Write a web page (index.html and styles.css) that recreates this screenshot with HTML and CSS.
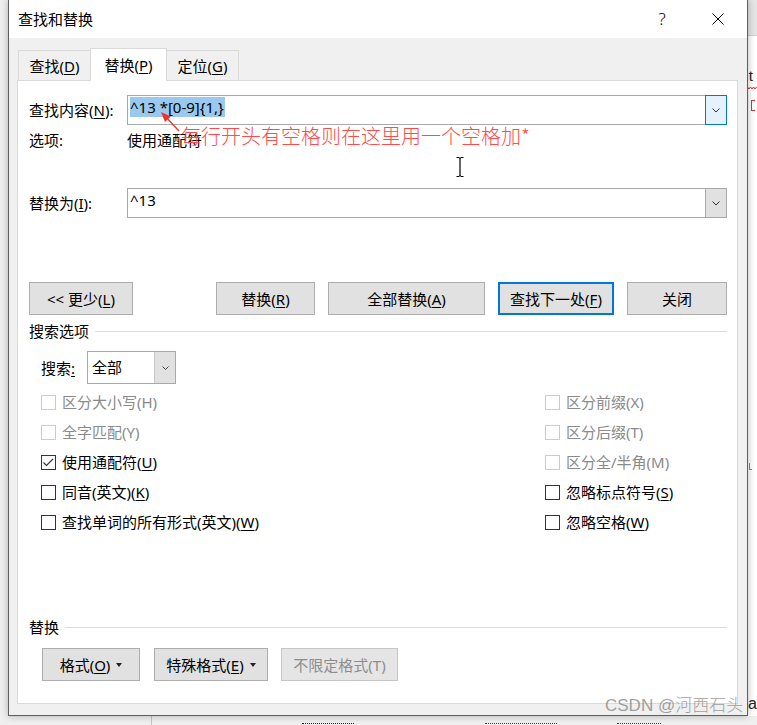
FILE: index.html
```html
<!DOCTYPE html>
<html lang="zh-CN">
<head>
<meta charset="utf-8">
<title>查找和替换</title>
<link rel="stylesheet" href="styles.css">
</head>
<body>
<div class="desk">
  <div class="bg-top-right"></div>
  <div class="bg-right"></div>
  <span class="frag frag-it">lit</span>
  <svg class="frag frag-squiggle" width="12" height="4" viewBox="0 0 12 4"><polyline points="0,3 1.5,1 3,3 4.5,1 6,3 7.5,1 9,3 10.5,1 12,3" fill="none" stroke="#e0302a" stroke-width="1"/></svg>
  <span class="frag frag-bracket"></span>
  <span class="frag frag-l"></span>
  <span class="frag frag-a">a</span>
  <span class="frag frag-vline"></span>
  <span class="frag frag-dots d1"></span>
  <span class="frag frag-dots d2"></span>
  <span class="frag frag-dots d3"></span>

  <div class="dialog">
    <div class="titlebar">
      <span class="title">查找和替换</span>
      <span class="help">?</span>
      <svg class="close" width="12" height="12" viewBox="0 0 12 12"><path d="M0.5 0.5 L11.5 11.5 M11.5 0.5 L0.5 11.5" stroke="#000" stroke-width="1" fill="none"/></svg>
    </div>
    <div class="body">
      <div class="tabs">
        <div class="tab t1">查找(<u>D</u>)</div>
        <div class="tab t2 active">替换(<u>P</u>)</div>
        <div class="tab t3">定位(<u>G</u>)</div>
      </div>
      <div class="panel">
        <div class="field-row">
          <span class="lbl">查找内容(<u>N</u>):</span>
          <div class="combo">
            <div class="combo-text"><span class="sel">^13 *[0-9]{1,}</span></div>
            <div class="combo-btn focus">
              <svg width="8" height="5" viewBox="0 0 8 5"><polyline points="0.5,0.5 4,4 7.5,0.5" fill="none" stroke="#333" stroke-width="1"/></svg>
            </div>
          </div>
        </div>
        <div class="opt-row">
          <span class="lbl">选项:</span>
          <span>使用通配符</span>
        </div>
        <div class="field-row replace-row">
          <span class="lbl">替换为(<u>I</u>):</span>
          <div class="combo">
            <div class="combo-text"><span class="plain">^13</span></div>
            <div class="combo-btn">
              <svg width="8" height="5" viewBox="0 0 8 5"><polyline points="0.5,0.5 4,4 7.5,0.5" fill="none" stroke="#333" stroke-width="1"/></svg>
            </div>
          </div>
        </div>
        <div class="btn-row">
          <div class="btn b-less">&lt;&lt; 更少(<u>L</u>)</div>
          <div class="btn-group">
            <div class="btn b-rep">替换(<u>R</u>)</div>
            <div class="btn b-all">全部替换(<u>A</u>)</div>
            <div class="btn b-next default">查找下一处(<u>F</u>)</div>
            <div class="btn b-close">关闭</div>
          </div>
        </div>
        <div class="section sec-search">
          <span class="sec-label">搜索选项</span>
          <span class="rule"></span>
        </div>
        <div class="search-row">
          <span class="search-lbl">搜索<u>:</u></span>
          <div class="select">
            <span class="select-text">全部</span>
            <span class="select-btn">
              <svg width="7" height="4" viewBox="0 0 7 4"><polyline points="0.5,0.5 3.5,3.5 6.5,0.5" fill="none" stroke="#444" stroke-width="1"/></svg>
            </span>
          </div>
        </div>
        <div class="checks">
          <div class="chk disabled"><span class="box"></span><span>区分大小写(H)</span></div>
          <div class="chk disabled"><span class="box"></span><span>区分前缀(X)</span></div>
          <div class="chk disabled"><span class="box"></span><span>全字匹配(Y)</span></div>
          <div class="chk disabled"><span class="box"></span><span>区分后缀(T)</span></div>
          <div class="chk"><span class="box"><svg width="13" height="13" viewBox="0 0 13 13"><polyline points="1.5,6.5 4.5,9.5 11,3" fill="none" stroke="#333" stroke-width="1.1"/></svg></span><span>使用通配符(<u>U</u>)</span></div>
          <div class="chk disabled"><span class="box"></span><span>区分全/半角(M)</span></div>
          <div class="chk"><span class="box"></span><span>同音(英文)(<u>K</u>)</span></div>
          <div class="chk"><span class="box"></span><span>忽略标点符号(<u>S</u>)</span></div>
          <div class="chk"><span class="box"></span><span>查找单词的所有形式(英文)(<u>W</u>)</span></div>
          <div class="chk"><span class="box"></span><span>忽略空格(<u>W</u>)</span></div>
        </div>
        <div class="section sec-replace">
          <span class="sec-label">替换</span>
          <span class="rule"></span>
        </div>
        <div class="btn-row2">
          <div class="btn b-fmt">格式(<u>O</u>)<span class="caret"></span></div>
          <div class="btn b-special">特殊格式(<u>E</u>)<span class="caret"></span></div>
          <div class="btn b-nofmt disabled">不限定格式(T)</div>
        </div>
      </div>
    </div>
  </div>

  <svg class="annot-arrow" width="30" height="30" viewBox="0 0 30 30">
    <line x1="12.5" y1="13.8" x2="24" y2="26" stroke="#f03030" stroke-width="1.3"/>
    <polygon points="6,7 15.8,11.5 10,17" fill="#f03030"/>
  </svg>
  <div class="annot-text">每行开头有空格则在这里用一个空格加*</div>
  <svg class="ibeam" width="12" height="22" viewBox="0 0 12 22">
    <path d="M2.5 1.5 H5 M7 1.5 H9.5 M6 2 V20 M2.5 20.5 H5 M7 20.5 H9.5 M5 2 H7 M5 20 H7" stroke="#000" stroke-width="1.2" fill="none"/>
  </svg>
  <div class="watermark">CSDN @河西石头</div>
</div>
</body>
</html>
```

FILE: styles.css
```css
* { box-sizing: border-box; }

html, body {
  margin: 0;
  padding: 0;
}

body {
  width: 757px;
  height: 725px;
  overflow: hidden;
  background: #efefef;
  font-family: "Noto Sans", "Noto Sans CJK SC", sans-serif;
  font-size: 15px;
  line-height: 20px;
  color: #000;
}

u {
  text-decoration: underline;
  text-decoration-thickness: 1px;
  text-underline-offset: 2px;
}

.desk {
  position: relative;
  width: 757px;
  height: 725px;
}

/* ---------- backdrop fragments (behind the dialog) ---------- */
.bg-top-right {
  position: absolute;
  left: 748px;
  top: 0;
  width: 9px;
  height: 36px;
  background: #e4e4e4;
  border-bottom: 1px solid #d0d0d0;
}
.bg-right {
  position: absolute;
  left: 748px;
  top: 36px;
  width: 9px;
  height: 680px;
  background: #ffffff;
}
.frag { position: absolute; }
.frag-it {
  left: 742px;
  top: 66px;
  font-size: 15px;
  color: #222;
  font-family: "Liberation Sans", sans-serif;
}
.frag-squiggle { left: 746px; top: 86px; }
.frag-bracket {
  left: 751px;
  top: 100px;
  width: 4px;
  height: 11px;
  border-left: 1px solid #e03030;
  border-top: 1px solid #e03030;
  border-bottom: 1px solid #e03030;
}
.frag-l {
  left: 749px;
  top: 463px;
  width: 3px;
  height: 7px;
  border-left: 1px solid #888;
  border-bottom: 1px solid #888;
}
.frag-a {
  left: 748px;
  top: 694px;
  font-size: 16px;
  color: #222;
  font-family: "Liberation Sans", sans-serif;
}
.frag-vline {
  left: 151px;
  top: 710px;
  width: 1px;
  height: 15px;
  background: #c4c4c4;
}
.frag-dots {
  top: 723px;
  height: 2px;
  border-top: 1px dotted #8a1c1c;
}
.frag-dots.d1 { left: 302px; width: 52px; border-top-color: #222; }
.frag-dots.d2 { left: 485px; width: 72px; }
.frag-dots.d3 { left: 617px; width: 44px; }

/* ---------- dialog window ---------- */
.dialog {
  position: relative;
  z-index: 1;
  margin-left: 8px;
  width: 740px;
  height: 716px;
  border: 1px solid #5e5e5e;
  border-top: none;
  background: #f0f0f0;
  box-shadow: 0 0 7px rgba(0, 0, 0, 0.28);
}

.titlebar {
  height: 38px;
  background: #fff;
  display: flex;
  align-items: center;
}
.title {
  flex: 1;
  padding-left: 9px;
  font-size: 15px;
}
.help {
  width: 12px;
  margin-right: 44px;
  text-align: center;
  font-size: 17px;
  font-weight: 300;
  line-height: 20px;
}
.close {
  display: block;
  margin-right: 23px;
}

.body {
  padding: 10px 9px 11px 8px;
}

/* tabs */
.tabs {
  position: relative;
  z-index: 1;
  display: flex;
  align-items: flex-end;
  height: 33px;
  margin-bottom: -1px;
  padding-left: 1px;
}
.tab {
  height: 31px;
  border: 1px solid #d9d9d9;
  background: #f0f0f0;
  display: flex;
  align-items: center;
  justify-content: center;
  padding-top: 1px;
}
.tab.t1 { width: 73px; }
.tab.t2 { width: 77px; margin-left: -1px; }
.tab.t3 { width: 73px; margin-left: -1px; }
.tab.active {
  position: relative;
  z-index: 1;
  height: 33px;
  background: #fff;
  border-bottom: none;
  padding-top: 0;
}

/* panel */
.panel {
  height: 624px;
  background: #fff;
  border: 1px solid #d9d9d9;
  padding: 14px 10px 0 11px;
}

.field-row {
  display: flex;
  align-items: center;
  height: 30px;
}
.lbl {
  width: 98px;
  flex: none;
}
.combo {
  width: 600px;
  height: 30px;
  border: 1px solid #a8a8a8;
  display: flex;
  background: #fff;
}
.combo-text {
  flex: 1;
  padding: 1px 0 0 2px;
}
.sel {
  display: inline-block;
  background: #99c9ef;
  height: 20px;
  line-height: 20px;
  padding-right: 1px;
}
.plain {
  display: inline-block;
  height: 20px;
  line-height: 20px;
}
.combo-btn {
  width: 22px;
  height: 30px;
  margin: -1px -1px -1px 0;
  border: 1px solid #a8a8a8;
  background: #e1e1e1;
  display: flex;
  align-items: center;
  justify-content: center;
}
.combo-btn svg { display: block; }
.combo-btn.focus {
  border-color: #0078d7;
  background: #e5f1fb;
}

.opt-row {
  display: flex;
  margin-top: 5px;
  height: 20px;
}

.replace-row { margin-top: 38px; }

/* buttons */
.btn-row {
  display: flex;
  margin-top: 64px;
  height: 33px;
}
.btn-group {
  display: flex;
  gap: 13px;
  margin-left: auto;
}
.btn {
  height: 33px;
  border: 1px solid #adadad;
  background: #e1e1e1;
  display: flex;
  align-items: center;
  justify-content: center;
  white-space: nowrap;
}
.b-less { width: 104px; }
.b-rep { width: 99px; }
.b-all { width: 157px; }
.b-next { width: 116px; }
.b-close { width: 100px; }
.btn.default {
  border: 2px solid #0078d7;
}

/* sections */
.section {
  display: flex;
  align-items: center;
  height: 20px;
}
.sec-search { margin-top: 6px; }
.sec-replace { margin-top: 85px; }
.rule {
  flex: 1;
  height: 1px;
  background: #dcdcdc;
  margin-left: 6px;
}

.search-row {
  display: flex;
  align-items: center;
  margin-top: 10px;
  padding-left: 12px;
  height: 33px;
}
.search-lbl { width: 46px; }
.select {
  width: 89px;
  height: 33px;
  border: 1px solid #a8a8a8;
  display: flex;
}
.select-text {
  flex: 1;
  padding-left: 4px;
  line-height: 31px;
}
.select-btn {
  width: 21px;
  background: #e1e1e1;
  border-left: 1px solid #c8c8c8;
  display: flex;
  align-items: center;
  justify-content: center;
}
.select-btn svg { display: block; }

/* checkboxes */
.checks {
  display: grid;
  grid-template-columns: 504px auto;
  grid-auto-rows: 20px;
  row-gap: 10px;
  margin-top: 8px;
  padding-left: 12px;
}
.chk {
  display: flex;
  align-items: center;
  gap: 6px;
  white-space: nowrap;
}
.box {
  width: 15px;
  height: 15px;
  border: 1px solid #333;
  background: #fff;
  display: flex;
  align-items: center;
  justify-content: center;
  flex: none;
}
.box svg { display: block; }
.chk.disabled { color: #8a8a8a; }
.chk.disabled .box { border-color: #cccccc; }

/* bottom buttons */
.btn-row2 {
  display: flex;
  margin-top: 11px;
  padding-left: 13px;
}
.b-fmt { width: 98px; }
.b-special { width: 114px; margin-left: 14px; }
.b-nofmt { width: 117px; margin-left: 13px; }
.btn.disabled {
  color: #8d8d8d;
  border-color: #c6c6c6;
  background: #e5e5e5;
}
.caret {
  display: inline-block;
  width: 0;
  height: 0;
  margin-left: 6px;
  margin-top: 1px;
  border-left: 3.5px solid transparent;
  border-right: 3.5px solid transparent;
  border-top: 4px solid #222;
}

/* ---------- overlays ---------- */
.annot-arrow {
  position: absolute;
  z-index: 3;
  left: 155px;
  top: 105px;
}
.annot-text {
  position: absolute;
  z-index: 3;
  left: 181px;
  top: 126px;
  font-family: "Noto Sans CJK SC", sans-serif;
  font-size: 20px;
  font-weight: 300;
  line-height: 20px;
  color: #ff4a4a;
  white-space: nowrap;
}
.ibeam {
  position: absolute;
  z-index: 3;
  left: 454px;
  top: 156px;
}
.watermark {
  position: absolute;
  z-index: 3;
  left: 605px;
  top: 695px;
  font-family: "Liberation Sans", "Noto Sans CJK SC", sans-serif;
  font-size: 17px;
  line-height: 22px;
  font-weight: 300;
  color: rgba(130, 130, 130, 0.75);
  white-space: nowrap;
}
```
